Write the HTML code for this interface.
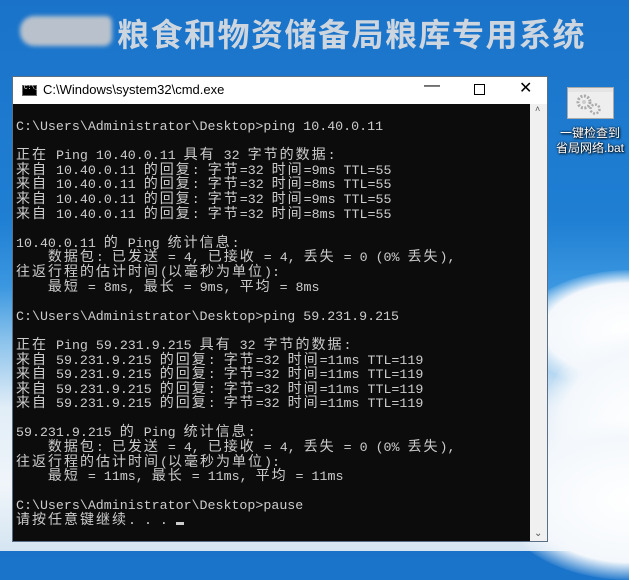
<!DOCTYPE html>
<html><head><meta charset="utf-8">
<style>
html,body{margin:0;padding:0}
body{width:629px;height:551px;overflow:hidden;position:relative;
background:linear-gradient(180deg,#1a73c9 0%,#1f7fd3 40%,#3b97e0 52%,#8cc3ec 62%,#e1edf7 74%,#f0f5fa 88%,#d5e5f2 100%);
font-family:"Liberation Sans","Noto Sans CJK SC",sans-serif}
.cloud{position:absolute;border-radius:50%;background:radial-gradient(ellipse at center,#fff 0%,#f4f8fc 55%,rgba(240,246,252,0) 72%)}
.banner{position:absolute;left:117px;top:11px;font-size:32px;line-height:44px;font-weight:bold;color:#cdd5de;letter-spacing:1.5px;white-space:nowrap;font-family:"Noto Sans CJK SC",sans-serif}
.blur{position:absolute;left:20px;top:16px;width:92px;height:30px;background:#b9c2cc;border-radius:14px 6px 8px 14px;filter:blur(2px)}
.win{position:absolute;left:12px;top:76px;width:536px;height:466px;background:#0c0c0c;border:1px solid #5a6e86;box-sizing:border-box;overflow:hidden}
.title{position:absolute;left:0;top:0;width:100%;height:27px;background:#fff;color:#000;font-size:13px}
.title .t{position:absolute;left:30px;top:5px}
.ico{position:absolute;left:9px;top:8px;width:13px;height:9px;background:#000;border:1px solid #666}
.ico:after{content:"C:\\_";position:absolute;left:1px;top:-2px;font-size:6px;color:#fff;font-family:"Liberation Mono",monospace}
.ctl{position:absolute;top:3px;font-size:16px;font-weight:300}
.sb{position:absolute;right:0;top:27px;width:17px;bottom:0;background:#f0f0f0}
.con{position:absolute;left:3px;top:43px;margin:0;color:#cccccc;font-family:"Liberation Mono","Noto Sans CJK SC",monospace;font-size:13.3px;line-height:14.6px;white-space:pre}
.con i{font-style:normal;font-family:"Noto Sans CJK SC",sans-serif;font-size:14px;letter-spacing:2px;line-height:0}
.lbl{position:absolute;left:552px;top:126px;width:76px;text-align:center;color:#fff;font-size:12px;line-height:15px;text-shadow:0 0 2px #000,1px 1px 2px #000}
.icon{position:absolute;left:567px;top:87px;width:45px;height:30px;background:#eee;border:1px solid #aaa}
</style></head><body>
<div class="cloud" style="left:520px;top:270px;width:220px;height:120px"></div>
<div class="cloud" style="left:540px;top:330px;width:200px;height:200px"></div>
<div class="cloud" style="left:500px;top:420px;width:260px;height:160px"></div>
<div class="blur"></div>
<div class="banner">粮食和物资储备局粮库专用系统</div>
<div class="icon"><svg width="45" height="30"><rect x="0" y="0" width="45" height="4" fill="#e4e4e4"/><circle cx="16" cy="14" r="6" fill="none" stroke="#aaa" stroke-width="3" stroke-dasharray="2 1.5"/><circle cx="16" cy="14" r="2" fill="#ccc"/><circle cx="27" cy="21" r="4.5" fill="none" stroke="#aaa" stroke-width="2.5" stroke-dasharray="2 1.5"/></svg></div>
<div class="lbl">一键检查到<br>省局网络.bat</div>
<div class="win">
<div class="title"><div class="ico"></div><span class="t">C:\Windows\system32\cmd.exe</span>
<span class="ctl" style="left:411px;top:0">—</span>
<span style="position:absolute;left:461px;top:7px;width:9px;height:9px;border:1px solid #000"></span>
<span class="ctl" style="left:506px;top:1px">✕</span></div>
<div class="sb"><span style="position:absolute;left:4px;bottom:2px;font-size:10px;color:#555">⌄</span><span style="position:absolute;left:5px;top:0;font-size:9px;color:#555">˄</span></div>
<pre class="con">C:\Users\Administrator\Desktop&gt;ping 10.40.0.11

<i>正在</i> Ping 10.40.0.11 <i>具有</i> 32 <i>字节的数据</i>:
<i>来自</i> 10.40.0.11 <i>的回复</i>: <i>字节</i>=32 <i>时间</i>=9ms TTL=55
<i>来自</i> 10.40.0.11 <i>的回复</i>: <i>字节</i>=32 <i>时间</i>=8ms TTL=55
<i>来自</i> 10.40.0.11 <i>的回复</i>: <i>字节</i>=32 <i>时间</i>=9ms TTL=55
<i>来自</i> 10.40.0.11 <i>的回复</i>: <i>字节</i>=32 <i>时间</i>=8ms TTL=55

10.40.0.11 <i>的</i> Ping <i>统计信息</i>:
    <i>数据包</i>: <i>已发送</i> = 4, <i>已接收</i> = 4, <i>丢失</i> = 0 (0% <i>丢失</i>),
<i>往返行程的估计时间</i>(<i>以毫秒为单位</i>):
    <i>最短</i> = 8ms, <i>最长</i> = 9ms, <i>平均</i> = 8ms

C:\Users\Administrator\Desktop&gt;ping 59.231.9.215

<i>正在</i> Ping 59.231.9.215 <i>具有</i> 32 <i>字节的数据</i>:
<i>来自</i> 59.231.9.215 <i>的回复</i>: <i>字节</i>=32 <i>时间</i>=11ms TTL=119
<i>来自</i> 59.231.9.215 <i>的回复</i>: <i>字节</i>=32 <i>时间</i>=11ms TTL=119
<i>来自</i> 59.231.9.215 <i>的回复</i>: <i>字节</i>=32 <i>时间</i>=11ms TTL=119
<i>来自</i> 59.231.9.215 <i>的回复</i>: <i>字节</i>=32 <i>时间</i>=11ms TTL=119

59.231.9.215 <i>的</i> Ping <i>统计信息</i>:
    <i>数据包</i>: <i>已发送</i> = 4, <i>已接收</i> = 4, <i>丢失</i> = 0 (0% <i>丢失</i>),
<i>往返行程的估计时间</i>(<i>以毫秒为单位</i>):
    <i>最短</i> = 11ms, <i>最长</i> = 11ms, <i>平均</i> = 11ms

C:\Users\Administrator\Desktop&gt;pause
<i>请按任意键继续</i>. . . <span style="display:inline-block;width:8px;height:3px;background:#ccc;vertical-align:-1px"></span></pre>
</div>
</body></html>
